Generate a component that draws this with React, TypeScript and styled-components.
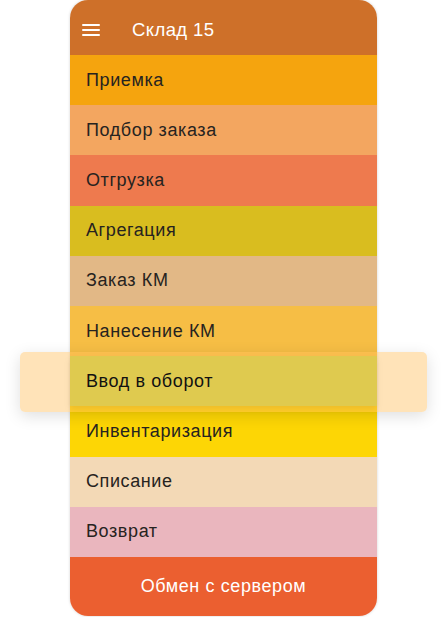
import React from "react";
import styled, { createGlobalStyle } from "styled-components";

const Global = createGlobalStyle`
  html, body { margin:0; padding:0; background:#fff; }
  body { font-family: "Liberation Sans", Arial, sans-serif; }
`;

const Page = styled.div`
  width:442px; height:617px; display:flex; justify-content:center;
  padding-left:5px; box-sizing:border-box;
`;

const Phone = styled.div`
  width:307px; height:616px; display:flex; flex-direction:column;
  border-radius:18px; background:#fff;
  box-shadow:0 0 3px rgba(0,0,0,.18);
`;

const Header = styled.header`
  height:55px; flex:none; display:flex; align-items:center; gap:32px;
  padding:4px 0 0 12px; box-sizing:border-box; background:#ce7029; color:#fff;
  border-radius:18px 18px 0 0; font-size:18.5px; letter-spacing:.4px;
`;

const Burger = styled.button`
  width:18px; height:12px; padding:0; border:0; background:none;
  display:flex; flex-direction:column; justify-content:space-between;
  span { display:block; height:2px; background:#fff; border-radius:1px; }
`;

const Menu = styled.nav`
  display:flex; flex-direction:column; flex:1;
`;

const Row = styled.div<{ $bg: string; $active?: boolean }>`
  position:relative; height:50.2px; flex:none; display:flex; align-items:center;
  padding-left:16px; background:${p => p.$bg}; color:#262320;
  font-size:18px; letter-spacing:.6px;
  ${p => p.$active && `
    z-index:2; color:#111;
    box-shadow:0 3px 6px rgba(0,0,0,.12);
    &::before {
      content:""; position:absolute; z-index:-1;
      left:-50px; right:-50px; top:-4px; bottom:-6px; border-radius:5px;
      background:rgba(255,190,90,.43);
      box-shadow:0 4px 16px rgba(0,0,0,.13);
    }
    &::after {
      content:""; position:absolute; inset:0; background:${p.$bg}; z-index:-1;
    }
  `}
`;

const SyncButton = styled.button`
  flex:1; border:0; background:#eb5f30; color:#fff; font:inherit;
  font-size:18px; letter-spacing:.6px;
  border-radius:0 0 18px 18px; padding:0;
`;

const items: { title: string; bg: string; active?: boolean }[] = [
  { title: "Приемка", bg: "#f5a40e" },
  { title: "Подбор заказа", bg: "#f3a660" },
  { title: "Отгрузка", bg: "#ee7a4e" },
  { title: "Агрегация", bg: "#d9bd1f" },
  { title: "Заказ КМ", bg: "#e2b886" },
  { title: "Нанесение КМ", bg: "#f6be45" },
  { title: "Ввод в оборот", bg: "#dfca4f", active: true },
  { title: "Инвентаризация", bg: "#fdd605" },
  { title: "Списание", bg: "#f3d9b6" },
  { title: "Возврат", bg: "#eab6be" },
];

export default function App() {
  return (
    <Page>
      <Global />
      <Phone>
        <Header>
          <Burger aria-label="menu"><span /><span /><span /></Burger>
          Склад 15
        </Header>
        <Menu>
          {items.map(it => <Row key={it.title} $bg={it.bg} $active={it.active}>{it.title}</Row>)}
          <SyncButton>Обмен с сервером</SyncButton>
        </Menu>
      </Phone>
    </Page>
  );
}
